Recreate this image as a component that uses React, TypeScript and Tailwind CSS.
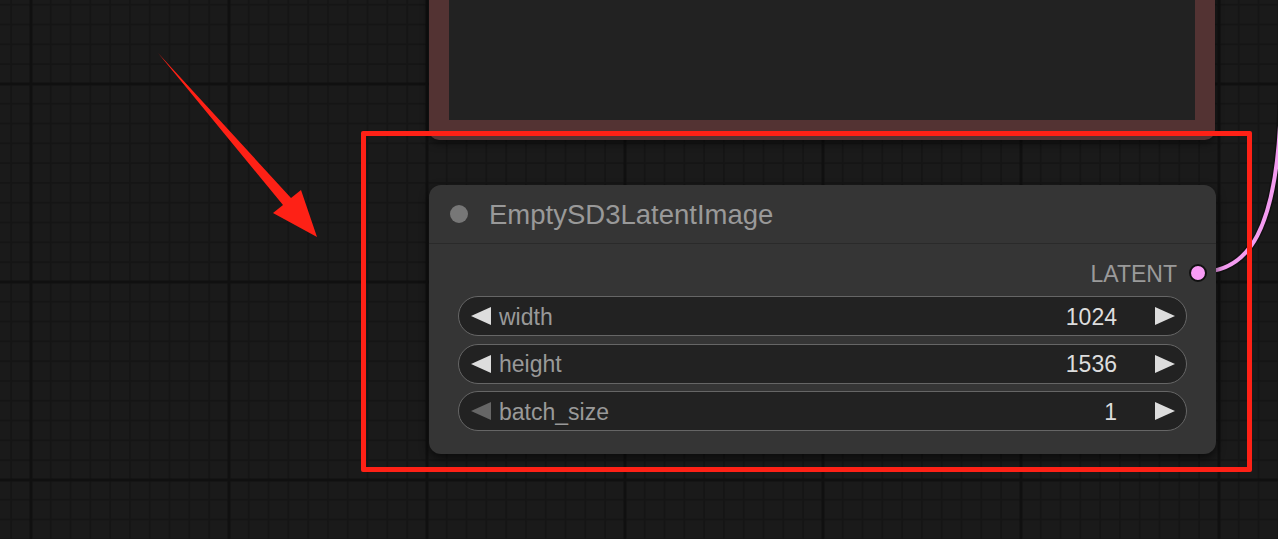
import React from 'react';

// canvas grid: minor every 19.8px, major every 198px
const Grid = () => {
  const minor = Array.from({ length: 10 }, (_, i) => 9.9 + i * 19.8);
  return (
    <svg className="absolute inset-0" width="1278" height="539">
      <defs>
        <pattern id="grid" patternUnits="userSpaceOnUse" width="198" height="198" x="21.1" y="74.1">
          <rect width="198" height="198" fill="#1a1a1a" />
          {minor.map((p, i) => (
            <g key={i}>
              <rect x={p - 1} y="0" width="2" height="198" fill={i === 0 ? '#101010' : '#151515'} />
              <rect x="0" y={p - 1} width="198" height="2" fill={i === 0 ? '#101010' : '#151515'} />
            </g>
          ))}
          <rect x="8.4" y="0" width="3" height="198" fill="#101010" />
          <rect x="0" y="8.4" width="198" height="3" fill="#101010" />
        </pattern>
      </defs>
      <rect width="1278" height="539" fill="url(#grid)" />
    </svg>
  );
};

const Tri = ({ dir, color }: { dir: 'left' | 'right'; color: string }) => (
  <svg width="20" height="18" viewBox="0 0 20 18" className="shrink-0">
    <polygon points={dir === 'left' ? '20,0 20,18 0,9' : '0,0 0,18 20,9'} fill={color} />
  </svg>
);

const widgets = [
  { label: 'width', value: '1024', canDec: true },
  { label: 'height', value: '1536', canDec: true },
  { label: 'batch_size', value: '1', canDec: false },
];

const App = () => {
  return (
    <div className="relative w-[1278px] h-[539px] overflow-hidden bg-[#1a1a1a] font-['Liberation_Sans',Arial,sans-serif]">
      <Grid />

      {/* node above, only its bottom visible */}
      <div className="absolute left-[429px] top-[-60px] w-[786px] h-[200px] border-[20px] border-[#533333] bg-[#222222] rounded-b-[10px] shadow-[0_3px_8px_rgba(0,0,0,0.55)]" />

      {/* link wire */}
      <svg className="absolute inset-0 pointer-events-none" width="1278" height="539">
        <path d="M1200 272 C1248 272 1278 232 1281 100" fill="none" stroke="#111" strokeWidth="7" />
        <path d="M1200 272 C1248 272 1278 232 1281 100" fill="none" stroke="#f49cf1" strokeWidth="4" />
      </svg>

      {/* EmptySD3LatentImage node */}
      <div className="absolute left-[429px] top-[185px] w-[787px] flex flex-col rounded-[12px] bg-[#353535] shadow-[0_4px_10px_rgba(0,0,0,0.6)]">
        <div className="h-[59px] flex items-center pl-[21px] border-b-[1px] border-[#2a2a2a]">
          <div className="w-[18px] h-[18px] rounded-full bg-[#777777]" />
          <span className="ml-[21px] mt-[2px] text-[27.5px] text-[#999999] leading-none">EmptySD3LatentImage</span>
        </div>
        <div className="flex flex-col pt-[7px] pb-[23px]">
          <div className="h-[44px] flex items-center justify-end pr-[9px]">
            <span className="text-[23px] text-[#9a9a9a] leading-none mt-[3px]">LATENT</span>
            <div className="ml-[12px] w-[18px] h-[18px] rounded-full bg-[#f99cf6] border-[2px] border-[#111]" />
          </div>
          <div className="flex flex-col gap-[7.5px] px-[29px] mt-[1px]">
            {widgets.map((w) => (
              <div
                key={w.label}
                className="h-[40px] flex items-center rounded-full bg-[#222222] border-[1.5px] border-[#666666] pl-[12px] pr-[11px]"
              >
                <Tri dir="left" color={w.canDec ? '#dddddd' : '#666666'} />
                <span className="ml-[8px] mt-[2px] text-[23px] text-[#999999] leading-none">{w.label}</span>
                <span className="ml-auto mt-[2px] text-[23px] text-[#dddddd] leading-none">{w.value}</span>
                <span className="ml-[38px]">
                  <Tri dir="right" color="#dddddd" />
                </span>
              </div>
            ))}
          </div>
        </div>
      </div>

      {/* annotation: arrow and box */}
      <svg className="absolute inset-0 pointer-events-none" width="1278" height="539">
        <polygon points="158,53 291,198 301,190 317,237 273,213 283,205" fill="#fe2116" />
      </svg>
      <div className="absolute left-[361px] top-[131px] w-[891px] h-[341px] border-[5px] border-[#fe2116] rounded-[2px]" />
    </div>
  );
};

export default App;
